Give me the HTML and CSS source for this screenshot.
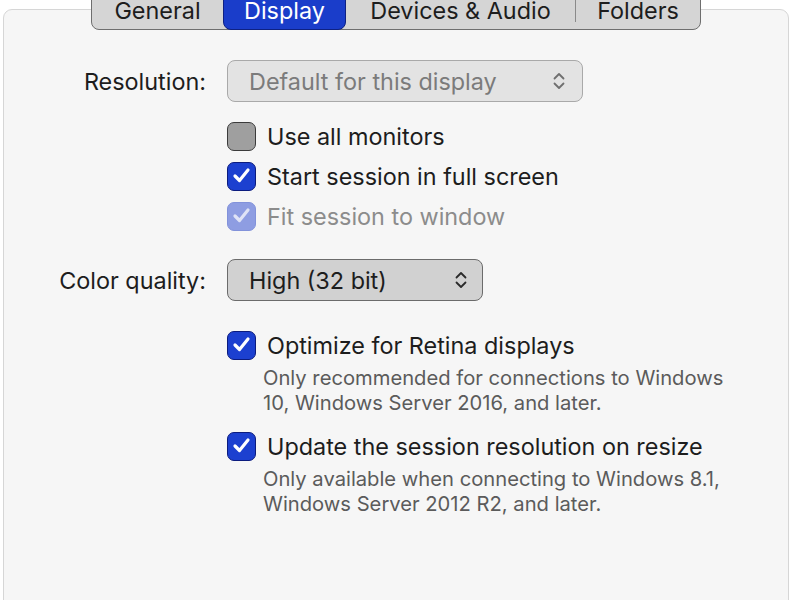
FILE: index.html
```html
<!DOCTYPE html>
<html lang="en">
<head>
<meta charset="utf-8">
<title>Display</title>
<link rel="stylesheet" href="styles.css">
</head>
<body>
<div class="panel">
  <div class="tabs">
    <div class="tab t-general"><span class="tlabel">General</span></div>
    <div class="tab t-display selected"><span class="tlabel">Display</span></div>
    <div class="tab t-devices"><span class="tlabel">Devices &amp; Audio</span></div>
    <div class="sep"></div>
    <div class="tab t-folders"><span class="tlabel">Folders</span></div>
  </div>

  <div class="form">
    <div class="row r-res">
      <div class="label">Resolution:</div>
      <div class="popup popup-res disabled">
        <span>Default for this display</span>
        <svg class="chev" width="12" height="18" viewBox="0 0 12 18"><path d="M1.5 6.5 L6 2 L10.5 6.5 M1.5 11.5 L6 16 L10.5 11.5" fill="none" stroke="currentColor" stroke-width="1.8" stroke-linecap="round" stroke-linejoin="round"/></svg>
      </div>
    </div>

    <div class="row r-check first">
      <div class="label"></div>
      <div class="check">
        <span class="box off"></span>
        <span class="ctext">Use all monitors</span>
      </div>
    </div>
    <div class="row r-check">
      <div class="label"></div>
      <div class="check">
        <span class="box on"><svg width="29" height="29" viewBox="0 0 29 29"><path d="M8 15 L12.5 19.5 L21 9" fill="none" stroke="#fff" stroke-width="3.2" stroke-linecap="round" stroke-linejoin="round"/></svg></span>
        <span class="ctext">Start session in full screen</span>
      </div>
    </div>
    <div class="row r-check">
      <div class="label"></div>
      <div class="check dim">
        <span class="box on-dim"><svg width="29" height="29" viewBox="0 0 29 29"><path d="M8 15 L12.5 19.5 L21 9" fill="none" stroke="#dfe3f6" stroke-width="3.2" stroke-linecap="round" stroke-linejoin="round"/></svg></span>
        <span class="ctext">Fit session to window</span>
      </div>
    </div>

    <div class="row r-color">
      <div class="label">Color quality:</div>
      <div class="popup popup-color">
        <span>High (32 bit)</span>
        <svg class="chev" width="12" height="18" viewBox="0 0 12 18"><path d="M1.5 6.5 L6 2 L10.5 6.5 M1.5 11.5 L6 16 L10.5 11.5" fill="none" stroke="currentColor" stroke-width="1.8" stroke-linecap="round" stroke-linejoin="round"/></svg>
      </div>
    </div>

    <div class="row r-check r-retina">
      <div class="label"></div>
      <div class="check">
        <span class="box on"><svg width="29" height="29" viewBox="0 0 29 29"><path d="M8 15 L12.5 19.5 L21 9" fill="none" stroke="#fff" stroke-width="3.2" stroke-linecap="round" stroke-linejoin="round"/></svg></span>
        <span class="ctext">Optimize for Retina displays</span>
      </div>
    </div>
    <div class="row r-desc">
      <div class="label"></div>
      <p class="desc">Only recommended for connections to Windows<br>10, Windows Server 2016, and later.</p>
    </div>

    <div class="row r-check r-update">
      <div class="label"></div>
      <div class="check">
        <span class="box on"><svg width="29" height="29" viewBox="0 0 29 29"><path d="M8 15 L12.5 19.5 L21 9" fill="none" stroke="#fff" stroke-width="3.2" stroke-linecap="round" stroke-linejoin="round"/></svg></span>
        <span class="ctext">Update the session resolution on resize</span>
      </div>
    </div>
    <div class="row r-desc">
      <div class="label"></div>
      <p class="desc">Only available when connecting to Windows 8.1,<br>Windows Server 2012 R2, and later.</p>
    </div>
  </div>
</div>
</body>
</html>
```

FILE: styles.css
```css
html, body {
  margin: 0;
  padding: 0;
  background: #ffffff;
  overflow: hidden;
}

body {
  font-family: Inter, "Liberation Sans", Arial, sans-serif;
  font-size: 23.4px;
  color: #1d1d1d;
  width: 800px;
  height: 600px;
}

.panel {
  margin: 9px 0 0 3px;
  width: 786px;
  height: 640px;
  box-sizing: border-box;
  background: #f6f6f6;
  border: 1px solid #d6d6d6;
  border-radius: 9px;
}

/* segmented tab control */
.tabs {
  display: flex;
  align-items: center;
  width: fit-content;
  height: 39px;
  box-sizing: border-box;
  margin: -19px auto 0;
  background: #d5d5d5;
  border: 1px solid #6e6e6e;
  border-radius: 8px;
}

.tab {
  height: 100%;
  display: flex;
  align-items: flex-end;
  justify-content: center;
  color: #1d1d1d;
  box-sizing: border-box;
  padding-bottom: 7px;
}

.tlabel {
  display: block;
  line-height: 22px;
}

.t-general { width: 131px; }
.t-display { width: 123px; }
.t-devices { width: 229px; }
.t-folders { width: 124px; }

.tab.selected {
  height: 39px;
  margin: -1px 0;
  padding-bottom: 7px;
  background: #1a3dca;
  border: 1px solid #0e2183;
  border-radius: 8px;
  color: #ffffff;
}

.sep {
  width: 1px;
  height: 22px;
  background: #8a8a8a;
}

/* form */
.form {
  display: flex;
  flex-direction: column;
  padding-top: 30px;
}

.row {
  display: grid;
  grid-template-columns: 202px 1fr;
  column-gap: 21px;
  align-items: center;
}

.label {
  text-align: right;
  color: #1d1d1d;
}

.popup {
  display: flex;
  align-items: center;
  justify-content: space-between;
  height: 42px;
  box-sizing: border-box;
  padding: 0 19px 0 21px;
  border-radius: 8px;
}

.popup-res {
  width: 356px;
  background: #e3e3e3;
  border: 1.5px solid #a9a9a9;
  color: #7b7b7b;
  padding-right: 17px;
}

.popup-color {
  width: 256px;
  background: #d1d1d1;
  border: 1.5px solid #6b6b6b;
  color: #1d1d1d;
  padding-right: 15px;
}

.chev { display: block; }

.popup-res .chev { color: #6f6f6f; }
.popup-color .chev { color: #2a2a2a; }

.r-check {
  height: 40px;
}

.r-check.first { margin-top: 14px; }

.check {
  display: flex;
  align-items: center;
  gap: 11px;
}

.box {
  width: 29px;
  height: 29px;
  box-sizing: border-box;
  border-radius: 7px;
  display: block;
  flex: none;
}

.box svg {
  display: block;
  margin: -1.5px;
}

.box.off {
  background: #9f9f9f;
  border: 1.5px solid #3b3b3b;
}

.box.on {
  background: #1c40d0;
  border: 1.5px solid #0b1b7e;
}

.box.on-dim {
  background: #8e9de2;
  border: 1.5px solid #8292da;
}

.check.dim .ctext { color: #8c8c8c; }

.r-color { margin-top: 23px; }

.r-retina { margin-top: 24px; }

.r-update { margin-top: 11px; }

.desc {
  margin: 0 0 0 36px;
  font-size: 20.2px;
  line-height: 25px;
  color: #5b5b5b;
}
```
